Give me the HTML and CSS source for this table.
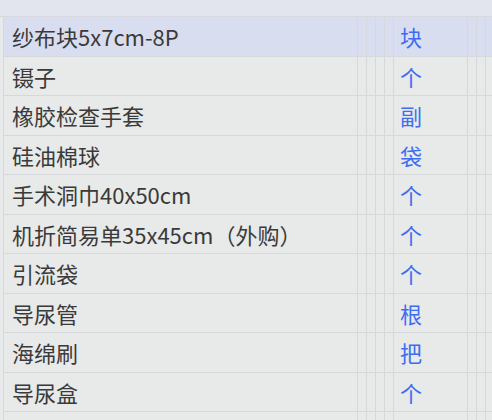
FILE: index.html
```html
<!DOCTYPE html>
<html lang="zh">
<head>
<meta charset="utf-8">
<link rel="stylesheet" href="styles.css">
</head>
<body>
<div class="band"></div>
<div class="grid">
  <div class="row sel"><div class="c name">纱布块5x7cm-8P</div><div class="c"></div><div class="c"></div><div class="c"></div><div class="c"></div><div class="c unit">块</div><div class="c"></div><div class="c"></div><div class="c"></div></div>
  <div class="row"><div class="c name">镊子</div><div class="c"></div><div class="c"></div><div class="c"></div><div class="c"></div><div class="c unit">个</div><div class="c"></div><div class="c"></div><div class="c"></div></div>
  <div class="row"><div class="c name">橡胶检查手套</div><div class="c"></div><div class="c"></div><div class="c"></div><div class="c"></div><div class="c unit">副</div><div class="c"></div><div class="c"></div><div class="c"></div></div>
  <div class="row"><div class="c name">硅油棉球</div><div class="c"></div><div class="c"></div><div class="c"></div><div class="c"></div><div class="c unit">袋</div><div class="c"></div><div class="c"></div><div class="c"></div></div>
  <div class="row"><div class="c name">手术洞巾40x50cm</div><div class="c"></div><div class="c"></div><div class="c"></div><div class="c"></div><div class="c unit">个</div><div class="c"></div><div class="c"></div><div class="c"></div></div>
  <div class="row"><div class="c name">机折简易单35x45cm（外购）</div><div class="c"></div><div class="c"></div><div class="c"></div><div class="c"></div><div class="c unit">个</div><div class="c"></div><div class="c"></div><div class="c"></div></div>
  <div class="row"><div class="c name">引流袋</div><div class="c"></div><div class="c"></div><div class="c"></div><div class="c"></div><div class="c unit">个</div><div class="c"></div><div class="c"></div><div class="c"></div></div>
  <div class="row"><div class="c name">导尿管</div><div class="c"></div><div class="c"></div><div class="c"></div><div class="c"></div><div class="c unit">根</div><div class="c"></div><div class="c"></div><div class="c"></div></div>
  <div class="row"><div class="c name">海绵刷</div><div class="c"></div><div class="c"></div><div class="c"></div><div class="c"></div><div class="c unit">把</div><div class="c"></div><div class="c"></div><div class="c"></div></div>
  <div class="row"><div class="c name">导尿盒</div><div class="c"></div><div class="c"></div><div class="c"></div><div class="c"></div><div class="c unit">个</div><div class="c"></div><div class="c"></div><div class="c"></div></div>
  <div class="row"><div class="c name"></div><div class="c"></div><div class="c"></div><div class="c"></div><div class="c"></div><div class="c unit"></div><div class="c"></div><div class="c"></div><div class="c"></div></div>
</div>
</body>
</html>
```
FILE: styles.css
```css
html, body {
  margin: 0;
  padding: 0;
  background: #e8e9ea;
  overflow: hidden;
}
body {
  width: 492px;
  height: 420px;
  font-family: "Noto Sans CJK SC", "Noto Sans", sans-serif;
  font-size: 22px;
  color: #3a3a3a;
}
.band {
  height: 16px;
  background: #e2e5ee;
  border-bottom: 1px solid #d6d8dd;
}
.grid {
  display: flex;
  flex-direction: column;
  height: 403px;
  overflow: hidden;
}
.row {
  flex: none;
  margin-left: 3px;
  display: grid;
  grid-template-columns: 353px 8px 8px 8px 8px 73px 8px 8px 1fr;
  column-gap: 1px;
  height: 38.5px;
  background: #d6d8dc;
  border-left: 1px solid #d6d8dc;
  border-bottom: 1px solid #d6d8dc;
}
.c {
  background: #e8e9e9;
  display: flex;
  align-items: center;
  white-space: nowrap;
  overflow: hidden;
}
.sel .c {
  background: #d8ddf0;
}
.name {
  padding-left: 8px;
}
.unit {
  padding-left: 6px;
  color: #3d6ef2;
}
```
